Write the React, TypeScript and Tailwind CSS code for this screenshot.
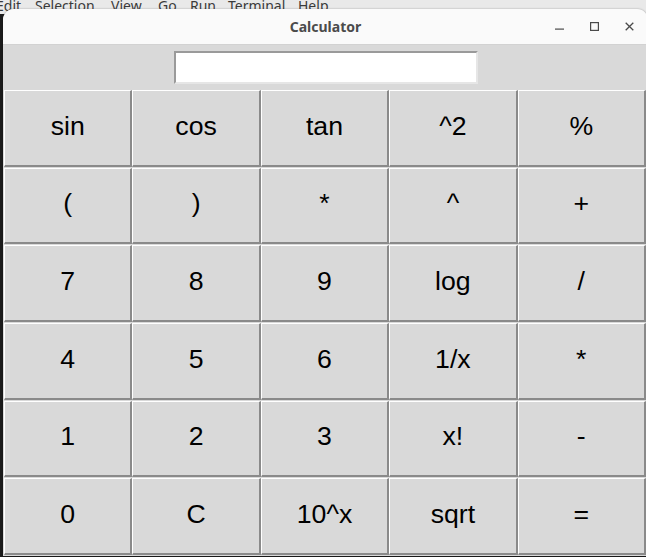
import React from "react";

const rows: string[][] = [
  ["sin", "cos", "tan", "^2", "%"],
  ["(", ")", "*", "^", "+"],
  ["7", "8", "9", "log", "/"],
  ["4", "5", "6", "1/x", "*"],
  ["1", "2", "3", "x!", "-"],
  ["0", "C", "10^x", "sqrt", "="],
];

const menu: [string, number][] = [
  ["Edit", -4],
  ["Selection", 35],
  ["View", 111],
  ["Go", 158],
  ["Run", 190],
  ["Terminal", 228],
  ["Help", 298],
];

export default function App() {
  return (
    <div className="relative w-[646px] h-[557px] overflow-hidden bg-[#1b1b1b]">
      {/* background editor menu bar */}
      <div className="absolute left-0 top-0 w-full h-[14px] bg-[#e9e9e9]">
        {menu.map(([t, x]) => (
          <span
            key={t}
            className="absolute top-[-3px] text-[14px] leading-[17px] text-[#3a3a3a]"
            style={{ left: x, fontFamily: '"Noto Sans", "DejaVu Sans", sans-serif' }}
          >
            {t}
          </span>
        ))}
      </div>

      {/* window */}
      <div className="absolute left-[3px] top-[9px] w-[645px] h-[547px] flex flex-col rounded-t-[11px] overflow-hidden bg-[#d9d9d9] shadow-[0_0_2px_rgba(0,0,0,0.35)]">
        {/* title bar */}
        <div className="relative h-[36px] shrink-0 bg-[#fafafa] border-b border-[#d2d2d2] flex items-center justify-center">
          <span
            className="text-[14px] font-bold text-[#4b4b4b]"
            style={{ fontFamily: '"Noto Sans", "DejaVu Sans", sans-serif' }}
          >
            Calculator
          </span>
          <div className="absolute right-[14px] top-0 h-full flex items-center gap-[26px]">
            <svg width="9" height="9" viewBox="0 0 9 9">
              <rect x="0" y="6.5" width="9" height="1.2" fill="#4a4a4a" />
            </svg>
            <svg width="9" height="9" viewBox="0 0 9 9">
              <rect x="0.6" y="0.6" width="7.8" height="7.8" fill="none" stroke="#4a4a4a" strokeWidth="1.2" />
            </svg>
            <svg width="9" height="9" viewBox="0 0 9 9">
              <path d="M0.7 0.7 L8.3 8.3 M8.3 0.7 L0.7 8.3" stroke="#4a4a4a" strokeWidth="1.3" />
            </svg>
          </div>
        </div>

        {/* content */}
        <div className="flex-1 flex flex-col">
          <div className="pt-[6px] pb-[6px] flex justify-center">
            <div className="w-[304px] h-[33px] bg-white border-t-2 border-l-2 border-[#9a9a9a] border-b-2 border-r-2 [border-bottom-color:#e6e6e6] [border-right-color:#e6e6e6]" />
          </div>
          <div className="flex-1 grid grid-cols-5 grid-rows-6 gap-y-[1px] pl-[1px] pr-[2px] pb-[1px]">
            {rows.flat().map((label, i) => (
              <div
                key={i}
                className="flex items-center justify-center pb-[4px] bg-[#d9d9d9] border-t border-l border-white border-b-2 border-r-2 [border-bottom-color:#8a8a8a] [border-right-color:#8a8a8a] text-black text-[26.67px]"
                style={{ fontFamily: '"Liberation Sans", Arial, sans-serif' }}
              >
                {label}
              </div>
            ))}
          </div>
        </div>
      </div>
    </div>
  );
}
